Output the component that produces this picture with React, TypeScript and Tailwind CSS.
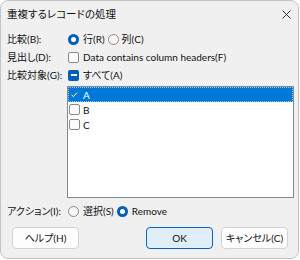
import type { ReactNode } from 'react'

const FONT = "font-['Lato','Noto_Sans_CJK_JP','Noto_Sans_CJK_SC',sans-serif]"

function Radio({ checked }: { checked?: boolean }) {
  return checked ? (
    <span className="flex h-[11px] w-[11px] shrink-0 items-center justify-center rounded-full bg-[#005fb8]">
      <span className="block h-[5px] w-[5px] rounded-full bg-white" />
    </span>
  ) : (
    <span className="block h-[11px] w-[11px] shrink-0 rounded-full border border-[#8a8a8a] bg-[#f7f7f7]" />
  )
}

function Box({ state }: { state?: 'mixed' }) {
  if (state === 'mixed') {
    return (
      <span className="flex h-[11px] w-[11px] shrink-0 items-center justify-center rounded-[2px] bg-[#005fb8]">
        <span className="block h-[1.5px] w-[6px] bg-white" />
      </span>
    )
  }
  return <span className="block h-[11px] w-[11px] shrink-0 rounded-[2px] border border-[#8a8a8a] bg-[#fbfbfb]" />
}

function Row({ label, children }: { label: string; children: ReactNode }) {
  return (
    <div className="flex h-[18px] items-center">
      <span className="w-[61px] shrink-0 whitespace-nowrap">{label}</span>
      <div className="flex items-center whitespace-nowrap">{children}</div>
    </div>
  )
}

function Button({ label, primary }: { label: string; primary?: boolean }) {
  return (
    <button
      className={
        primary
          ? 'flex h-[22px] w-[67px] items-center justify-center rounded-[4px] border border-[#0067c0] bg-[#e0eef9]'
          : 'flex h-[22px] w-[67px] items-center justify-center rounded-[4px] border border-[#d3d3d3] bg-[#fdfdfd]'
      }
    >
      {label}
    </button>
  )
}

export default function App() {
  const items = ['A', 'B', 'C']
  return (
    <div className={`h-[260px] w-[300px] bg-white ${FONT} text-[10px] leading-none text-[#111] [font-feature-settings:'palt']`}>
      <div className="flex h-[259px] w-[299px] flex-col overflow-hidden rounded-[8px] border border-[#c4c4c4] bg-[#f0f0f0]">
        {/* title bar */}
        <div className="flex h-[26px] shrink-0 items-center justify-between pl-[6px] pr-[7px]">
          <span className="text-[10.5px]">重複するレコードの処理</span>
          <svg width="9" height="9" viewBox="0 0 9 9" stroke="#333" strokeWidth="1">
            <path d="M0.5 0.5L8.5 8.5M8.5 0.5L0.5 8.5" />
          </svg>
        </div>

        <div className="flex flex-col pl-[6px] pr-[4px] pt-[3px]">
          <Row label="比較(B):">
            <Radio checked />
            <span className="ml-[4px]">行(R)</span>
            <span className="ml-[3px]"><Radio /></span>
            <span className="ml-[3px]">列(C)</span>
          </Row>
          <Row label="見出し(D):">
            <Box />
            <span className="ml-[4px]">Data contains column headers(F)</span>
          </Row>
          <Row label="比較対象(G):">
            <Box state="mixed" />
            <span className="ml-[4px]">すべて(A)</span>
          </Row>

          <div className="ml-[60px] mt-[2px] h-[112px] border border-[#828790] bg-white">
            {items.map((it, i) => (
              <div
                key={it}
                className={
                  i === 0
                    ? 'flex h-[15px] items-center border border-dotted border-[#9cc7ee] bg-[#0078d7] text-white'
                    : 'flex h-[15px] items-center pl-[1px]'
                }
              >
                {i === 0 ? (
                  <svg width="11" height="11" viewBox="0 0 11 11" fill="none" stroke="white" strokeWidth="1">
                    <path d="M2.5 5.8L4.4 7.6L8 3.6" />
                  </svg>
                ) : (
                  <Box />
                )}
                <span className="ml-[3px]">{it}</span>
              </div>
            ))}
          </div>

          <div className="mt-[4px]">
            <Row label="アクション(I):">
              <Radio />
              <span className="ml-[4px]">選択(S)</span>
              <span className="ml-[3px]"><Radio checked /></span>
              <span className="ml-[4px]">Remove</span>
            </Row>
          </div>
        </div>

        <div className="mt-[7px] flex pl-[11px] pr-[10px]">
          <Button label="ヘルプ(H)" />
          <div className="flex-1" />
          <Button label="OK" primary />
          <div className="w-[8px]" />
          <Button label="キャンセル(C)" />
        </div>
      </div>
    </div>
  )
}
